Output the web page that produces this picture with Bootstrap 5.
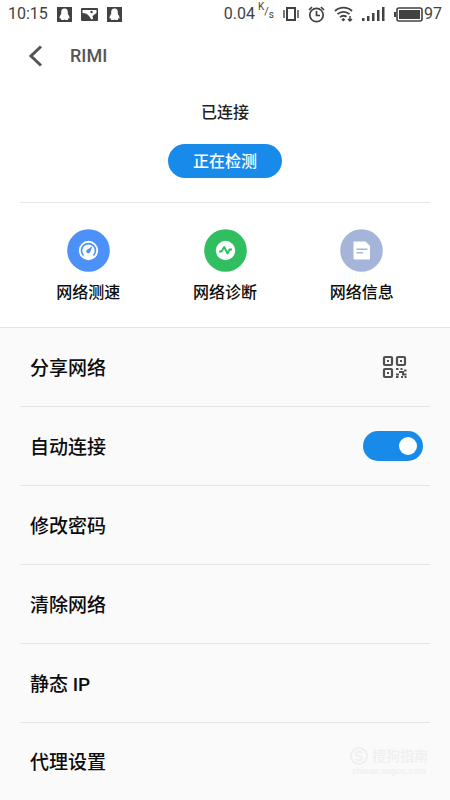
<!DOCTYPE html>
<html lang="zh-CN">
<head>
<meta charset="utf-8">
<meta name="viewport" content="width=device-width, initial-scale=1">
<title>RIMI</title>
<link href="https://cdn.jsdelivr.net/npm/bootstrap@5.3.0/dist/css/bootstrap.min.css" rel="stylesheet">
<style>
  body { font-family: Roboto, "Noto Sans CJK SC", sans-serif; color: #0c0c0c; background: #fff; font-weight: 500; }
  svg { display: block; flex: none; }
  .status { height: 28px; padding: 0 8px; color: #424242; font-size: 16px; font-weight: 400; line-height: 28px; }
  .status-icons { gap: 9px; }
  .rate-unit { font-size: 11px; margin-left: 3px; line-height: 24px; }
  .rate-unit sup, .rate-unit sub { font-size: 10px; }
  .title-bar { height: 56px; padding: 0 28px; color: #555; }
  .title-bar h1 { font-size: 18px; line-height: 24px; margin-left: 26px; font-weight: 500; }
  .back { color: #555; }
  .connection { padding: 17px 0 24px; margin: 0 20px; border-bottom: 1px solid #e6e6e6; }
  .connection p { font-size: 16px; line-height: 24px; color: #222; font-weight: 500; margin-bottom: 19px; }
  .check { background: #188bea; color: #fff; font-size: 16px; line-height: 24px; padding: 6px 25px 4px; border: 0; font-weight: 500; }
  .check:hover { background: #107cd6; color: #fff; }
  .tools { padding: 26px 20px 22px; }
  .tool { color: #0c0c0c; font-size: 16px; line-height: 24px; gap: 9px; }
  .settings { background: #fafafa; border-top: 1px solid #e4e4e4; padding: 0 20px; }
  .setting { height: 79px; padding: 0 7px 0 10px; border-bottom: 1px solid #e4e4e4; font-size: 19px; line-height: 28px; color: #0c0c0c; }
  .setting:last-child { border-bottom: 0; padding-right: 2px; }
  .setting-label { padding-top: 3px; }
  .setting:last-child .setting-label { padding-top: 0; }
  .qr { margin-right: 16px; color: #505050; }
  .form-switch .form-check-input.toggle { width: 60px; height: 30px; margin: 0; border: 0; float: none; background-color: #c8c8c8; background-size: 30px 20px;
    background-image: url("data:image/svg+xml,%3Csvg xmlns='http://www.w3.org/2000/svg' viewBox='0 0 30 20'%3E%3Ccircle cx='15' cy='10' r='9' fill='white'/%3E%3C/svg%3E"); background-repeat: no-repeat; }
  .form-switch .form-check-input.toggle:checked { background-color: #188bea; }
  .source { color: #efefef; padding-bottom: 1px; }
  .source-name { font-size: 14px; line-height: 18px; }
  .source-url { font-size: 9px; line-height: 12px; }
</style>
<script src="https://cdn.jsdelivr.net/npm/bootstrap@5.3.0/dist/js/bootstrap.bundle.min.js"></script>
</head>
<body class="min-vh-100 d-flex flex-column">
<header>
  <div class="status d-flex justify-content-between align-items-center">
    <div class="d-flex align-items-center status-icons">
      <span>10:15</span>
      <svg width="15" height="15" viewBox="0 0 15 15"><path fill="#424242" d="M0 0h15v15H0z"/><path fill="#fff" d="M7.500 1.500C5 1.500 4.200 3.200 4.200 5v2C3.200 8.300 2.300 9.800 2.500 11.500l1.200-.3.500 1.800h2.300l1-.6 1 .6h2.300l.5-1.800 1.200.3c.2-1.700-.7-3.200-1.700-4.500V5c0-1.800-.8-3.500-3.300-3.500z"/></svg>
      <svg width="17" height="15" viewBox="0 0 17 15"><rect y="1" width="17" height="13" rx="1" fill="#424242"/><path d="M1.500 3v3c3 .3 5 1 6.500 3l2.500 3.500 1.500-.5-.5-3 4-3V3z" fill="#fff"/><circle cx="10.500" cy="5" r="1.200" fill="#424242"/></svg>
      <svg width="15" height="15" viewBox="0 0 15 15"><path fill="#424242" d="M0 0h15v15H0z"/><path fill="#fff" d="M7.500 1.500C5 1.500 4.200 3.200 4.200 5v2C3.200 8.300 2.300 9.800 2.500 11.500l1.200-.3.500 1.800h2.300l1-.6 1 .6h2.300l.5-1.800 1.200.3c.2-1.700-.7-3.200-1.700-4.500V5c0-1.800-.8-3.500-3.300-3.500z"/></svg>
    </div>
    <div class="d-flex align-items-center status-icons">
      <span class="d-flex">0.04<span class="rate-unit"><sup>K</sup>/<sub>s</sub></span></span>
      <svg width="16" height="14" viewBox="0 0 16 14" fill="none" stroke="#424242"><path d="M1 3v8M15 3v8" stroke-width="1.400"/><rect x="4" y="1" width="8" height="12" stroke-width="2"/></svg>
      <svg width="17" height="17" viewBox="0 0 17 17" fill="none" stroke="#424242" stroke-width="1.700"><circle cx="8.500" cy="9" r="6.700"/><path d="M8.500 5v4.500H12M1 4l3-3M16 4l-3-3"/></svg>
      <svg width="19" height="16" viewBox="0 0 19 16" fill="none" stroke="#424242" stroke-width="1.800"><path d="M1 5c4.500-4.500 12.500-4.500 17 0M3.500 8.200c3.300-3.200 8.700-3.200 12 0M6 11.200c2-1.800 4.500-1.800 6.500-.4"/><path d="M7.300 13.500L9.300 11.900 11.300 13.500 9.300 15.500z" fill="#424242" stroke="none"/><path d="M16 10v5M14 13l2 2 2-2" stroke-width="1.400"/></svg>
      <svg width="23" height="14" viewBox="0 0 23 14" fill="#424242"><path d="M0 11h2.500v3H0zM5 9h2.500v5H5zM10 6h2.500v8H10zM15 3h2.500v11H15zM20 0h2.500v14H20z"/></svg>
      <span class="d-flex align-items-center">
      <svg width="30" height="15" viewBox="0 0 30 15"><rect x="3" y="1" width="25" height="13" rx="2" fill="none" stroke="#424242" stroke-width="1.600"/><path d="M5 3h21v9H5zM0 5h2v5H0z" fill="#424242"/></svg>
      97</span>
    </div>
  </div>
  <div class="title-bar d-flex align-items-center">
    <button class="btn p-0 border-0 back" type="button" aria-label="返回"><svg width="16" height="22" viewBox="0 0 16 22" fill="none" stroke="currentColor" stroke-width="3"><path d="M13 1.500L3 11l10 9.500"/></svg></button>
    <h1 class="mb-0">RIMI</h1>
  </div>
</header>
<main class="flex-grow-1 d-flex flex-column">
  <section class="connection text-center">
    <p>已连接</p>
    <button class="btn rounded-pill check" type="button">正在检测</button>
  </section>
  <nav class="tools row g-0 text-center" aria-label="网络工具">
    <a class="tool col d-flex flex-column align-items-center text-decoration-none" href="#speed">
      <svg width="43" height="43" viewBox="0 0 43 43"><circle cx="21.500" cy="21.500" r="21.300" fill="#4b91f8"/><circle cx="21.500" cy="21.500" r="9.700" fill="#fff"/><path d="M16.500 26.500a7 7 0 1 1 10 0" fill="none" stroke="#4b91f8" stroke-width="1.600"/><path d="M25.500 17l-2.300 5.700a2 2 0 1 1-2.600-2.300z" fill="#4b91f8"/></svg>
      网络测速
    </a>
    <a class="tool col d-flex flex-column align-items-center text-decoration-none" href="#diagnose">
      <svg width="43" height="43" viewBox="0 0 43 43"><circle cx="21.500" cy="21.500" r="21.300" fill="#30be60"/><circle cx="21.500" cy="21.500" r="9.700" fill="#fff"/><path d="M15 22.500h2.500L20.200 18l3.300 6.500 2-4H28" fill="none" stroke="#30be60" stroke-width="1.900" stroke-linejoin="round"/></svg>
      网络诊断
    </a>
    <a class="tool col d-flex flex-column align-items-center text-decoration-none" href="#info">
      <svg width="43" height="43" viewBox="0 0 43 43"><circle cx="21.500" cy="21.500" r="21.300" fill="#a5b5d9"/><path d="M14.500 12.500h11l4.500 4.500v13.500H14.500q-1 0-1-1v-16q0-1 1-1z" fill="#fff"/><path d="M16.500 20.200h11M16.500 23.700h6.500" stroke="#a5b5d9" stroke-width="1.500"/></svg>
      网络信息
    </a>
  </nav>
  <section class="settings flex-grow-1">
    <div class="setting d-flex align-items-center justify-content-between">
      <span class="setting-label">分享网络</span>
      <button class="btn p-0 border-0 qr" type="button" aria-label="二维码"><svg width="25" height="24" viewBox="0 0 25 24" fill="none" stroke="currentColor" stroke-width="2.200"><rect x="2" y="2" width="8" height="8" rx="1"/><rect x="15" y="2" width="8" height="8" rx="1"/><rect x="2" y="14" width="8" height="8" rx="1"/><path d="M5 6h2M18 6h2M5 18h2"/><path d="M14 14h2.500M18.500 14h2M22 15.500h2.500M17 17h4v2.500h3.500M14 19.500h3M14 22h2.500M19 22h2M22.500 22h2" stroke-width="2"/></svg></button>
    </div>
    <div class="setting d-flex align-items-center justify-content-between">
      <label class="setting-label" for="auto">自动连接</label>
      <div class="form-check form-switch p-0 m-0 d-flex"><input class="form-check-input toggle" type="checkbox" role="switch" id="auto" checked></div>
    </div>
    <a class="setting d-flex align-items-center text-decoration-none" href="#password"><span class="setting-label">修改密码</span></a>
    <a class="setting d-flex align-items-center text-decoration-none" href="#forget"><span class="setting-label">清除网络</span></a>
    <a class="setting d-flex align-items-center text-decoration-none" href="#static-ip"><span class="setting-label">静态 IP</span></a>
    <div class="setting d-flex align-items-center justify-content-between">
      <a class="setting-label text-reset text-decoration-none" href="#proxy">代理设置</a>
      <div class="source text-center">
        <div class="source-name d-flex align-items-center gap-1"><svg width="18" height="18" viewBox="0 0 18 18" fill="none" stroke="currentColor" stroke-width="2"><circle cx="9" cy="9" r="8"/><path d="M12 6c-1-2-6-1.500-6 .7C6 9.500 12 8.500 12 11.300c0 2.200-5 2.700-6 .5"/></svg>搜狗指南</div>
        <div class="source-url">zhinan.sogou.com</div>
      </div>
    </div>
  </section>
</main>
</body>
</html>
